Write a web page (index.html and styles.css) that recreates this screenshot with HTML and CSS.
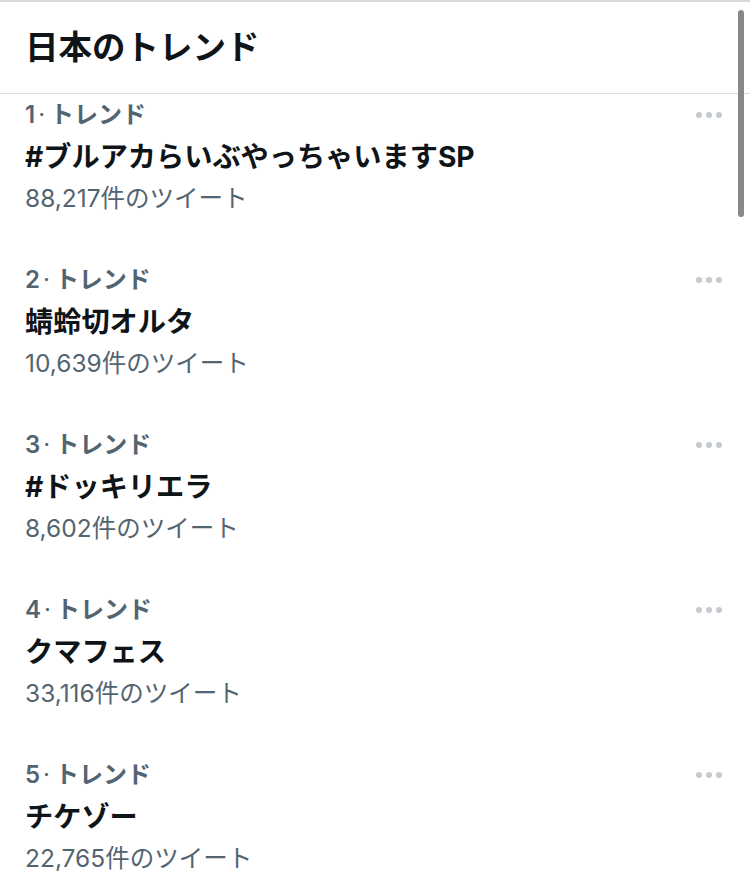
FILE: index.html
```html
<!DOCTYPE html>
<html lang="ja">
<head>
<meta charset="utf-8">
<link rel="stylesheet" href="styles.css">
</head>
<body>
<div class="page">
  <header class="header"><h1>日本のトレンド</h1></header>
  <ul class="trends">
    <li class="trend">
      <div class="meta">1<span class="dot">·</span>トレンド</div>
      <div class="title">#ブルアカらいぶやっちゃいますSP</div>
      <div class="count">88,217件のツイート</div>
      <span class="more"><i></i><i></i><i></i></span>
    </li>
    <li class="trend">
      <div class="meta">2<span class="dot">·</span>トレンド</div>
      <div class="title">蜻蛉切オルタ</div>
      <div class="count">10,639件のツイート</div>
      <span class="more"><i></i><i></i><i></i></span>
    </li>
    <li class="trend">
      <div class="meta">3<span class="dot">·</span>トレンド</div>
      <div class="title">#ドッキリエラ</div>
      <div class="count">8,602件のツイート</div>
      <span class="more"><i></i><i></i><i></i></span>
    </li>
    <li class="trend">
      <div class="meta">4<span class="dot">·</span>トレンド</div>
      <div class="title">クマフェス</div>
      <div class="count">33,116件のツイート</div>
      <span class="more"><i></i><i></i><i></i></span>
    </li>
    <li class="trend">
      <div class="meta">5<span class="dot">·</span>トレンド</div>
      <div class="title">チケゾー</div>
      <div class="count">22,765件のツイート</div>
      <span class="more"><i></i><i></i><i></i></span>
    </li>
  </ul>
  <div class="scrollbar"></div>
</div>
</body>
</html>
```

FILE: styles.css
```css
* { box-sizing: border-box; }
html, body { margin: 0; padding: 0; background: #fff; }
body {
  font-family: Inter, "Noto Sans CJK JP", sans-serif;
  color: #0f1419;
  overflow: hidden;
}
.page {
  position: relative;
  width: 750px;
  height: 871px;
  overflow: hidden;
  border-top: 2px solid #d9d9d9;
}
.header {
  height: 92px;
  border-bottom: 1px solid #dcdcdc;
  padding: 0 25px;
  display: flex;
  align-items: center;
}
.header h1 {
  margin: 0;
  font-size: 33.5px;
  font-weight: 700;
  line-height: 1;
  color: #0f1419;
}
.trends {
  list-style: none;
  margin: 0;
  padding: 0;
}
.trend {
  position: relative;
  height: 165px;
  padding: 0 25px;
}
.meta {
  font-size: 24px;
  line-height: 42px;
  font-weight: 600;
  color: #536471;
}
.meta .dot {
  margin: 0 5px 0 3px;
  font-weight: 400;
}
.title {
  font-size: 28.2px;
  line-height: 42px;
  font-weight: 700;
  color: #0f1419;
}
.count {
  font-size: 24.5px;
  line-height: 26px;
  margin-top: 7px;
  color: #536471;
}
.more {
  position: absolute;
  right: 28px;
  top: 18px;
  display: flex;
  gap: 4px;
}
.more i {
  width: 6px;
  height: 6px;
  border-radius: 50%;
  background: #c5cad0;
}
.scrollbar {
  position: absolute;
  right: 6px;
  top: 8px;
  width: 6px;
  height: 207px;
  border-radius: 3px;
  background: #888;
}
```
